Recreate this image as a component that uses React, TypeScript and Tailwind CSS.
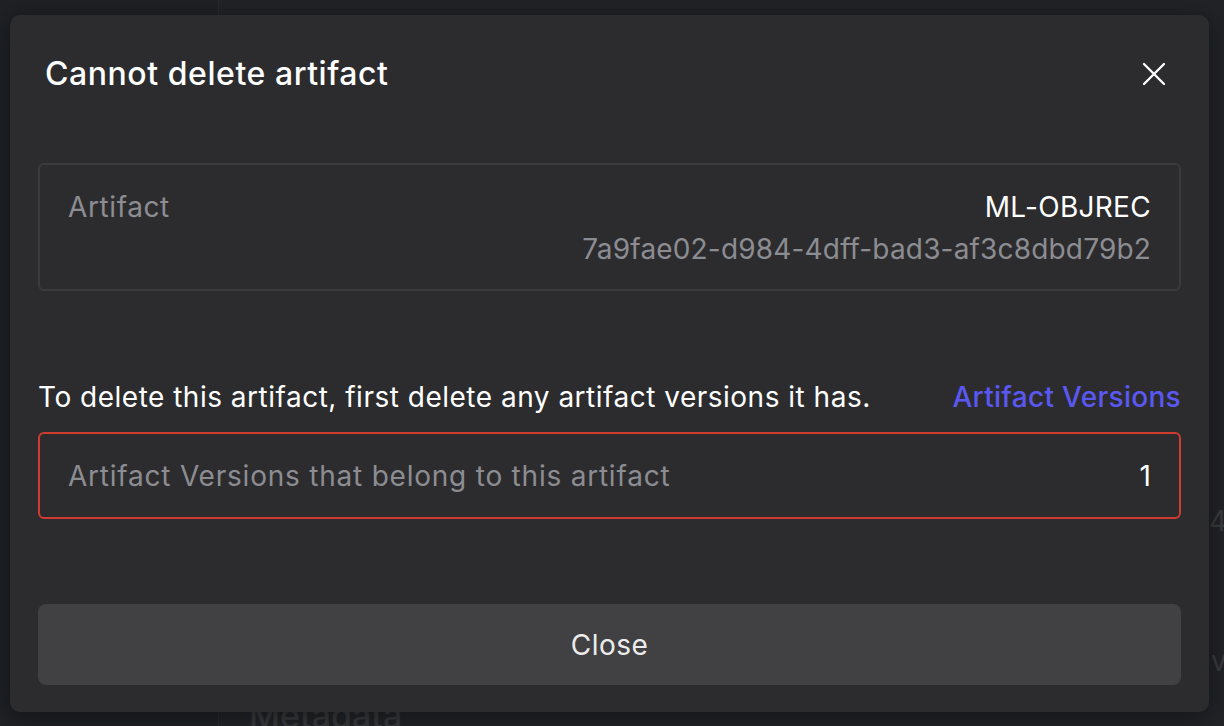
import React from "react";

export default function App() {
  const font = { fontFamily: "Inter, 'Noto Sans', sans-serif" };
  return (
    <div
      className="relative w-[1224px] h-[726px] overflow-hidden bg-[#222327] flex"
      style={font}
    >
      {/* background page */}
      <div className="w-[219px] h-full bg-[#202125] border-r border-[#2a2b2f]" />
      <div className="flex-1 relative">
        <div className="absolute left-[30px] top-[690px] text-[34px] font-medium text-[#37383b]">
          Metadata
        </div>
        <div className="absolute left-[990px] top-[500px] text-[28px] text-[#3a3b3e]">4</div>
        <div className="absolute left-[992px] top-[640px] text-[28px] text-[#3a3b3e]">v</div>
      </div>

      {/* dialog */}
      <div className="absolute left-[10px] top-[15px] w-[1199px] h-[697px] rounded-[10px] bg-[#2c2c2e] shadow-[0_4px_24px_rgba(0,0,0,0.45)] flex flex-col px-[28px] pt-[39px] pb-[27px]">
        <div className="flex items-center justify-between h-[40px] pl-[7px] pr-[15px]">
          <div className="text-[32px] font-medium text-white leading-[40px] tracking-[0.55px]">
            Cannot delete artifact
          </div>
          <svg width="24" height="24" viewBox="0 0 24 24" fill="none" stroke="#ffffff" strokeWidth="2.3" strokeLinecap="round">
            <path d="M2 2 L22 22 M22 2 L2 22" />
          </svg>
        </div>

        <div className="mt-[69px] h-[128px] rounded-[6px] border-2 border-[#3b3b3e] px-[28px] py-[21px] flex justify-between text-[28px] leading-[42px]">
          <div className="text-[#8c8d92] tracking-[0.6px]">Artifact</div>
          <div className="flex flex-col items-end">
            <div className="text-white tracking-[0.3px]">ML-OBJREC</div>
            <div className="text-[#8c8d92] tracking-[0.17px]">7a9fae02-d984-4dff-bad3-af3c8dbd79b2</div>
          </div>
        </div>

        <div className="mt-[86px] h-[40px] flex items-center justify-between text-[28px] leading-[40px]">
          <div className="text-white tracking-[0.5px]">To delete this artifact, first delete any artifact versions it has.</div>
          <div className="text-[#5b58f2] font-medium tracking-[0.3px]">Artifact Versions</div>
        </div>

        <div className="mt-[15px] h-[87px] rounded-[6px] border-2 border-[#d03b30] px-[28px] flex items-center justify-between text-[28px]">
          <div className="text-[#8c8d92] tracking-[0.78px]">Artifact Versions that belong to this artifact</div>
          <div className="text-white">1</div>
        </div>

        <div className="mt-[85px] h-[81px] rounded-[8px] bg-[#414143] flex items-center justify-center text-[28px] text-[#ececec] tracking-[0.5px]">
          Close
        </div>
      </div>
    </div>
  );
}
